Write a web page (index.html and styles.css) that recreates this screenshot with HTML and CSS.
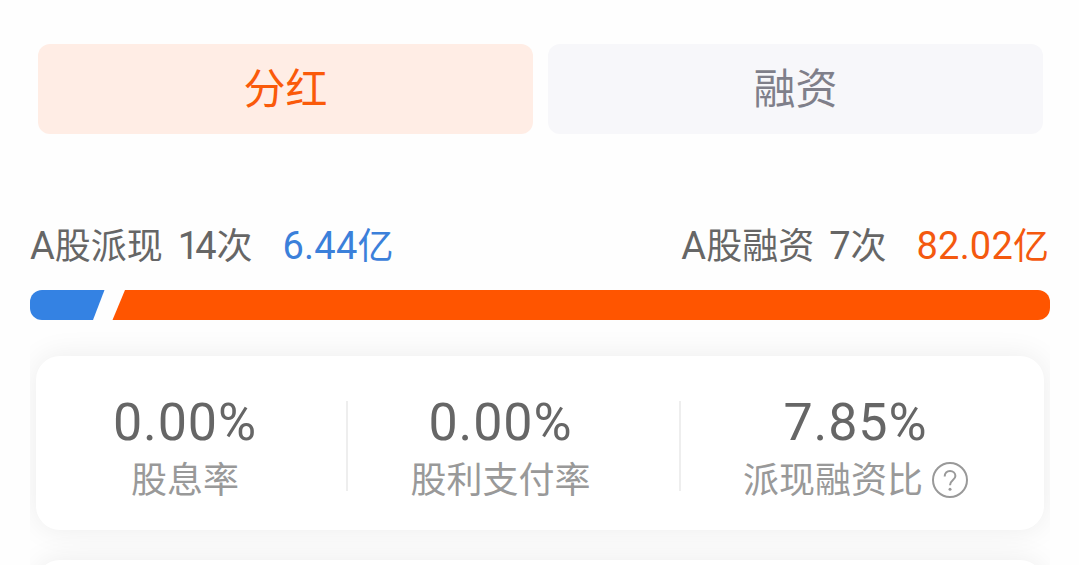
FILE: index.html
```html
<!DOCTYPE html>
<html lang="zh-CN">
<head>
<meta charset="utf-8">
<title>分红融资</title>
<link rel="stylesheet" href="styles.css">
</head>
<body>
<nav class="tabs">
  <div class="tab tab-active">分红</div>
  <div class="tab">融资</div>
</nav>
<section class="summary">
  <div class="total">
    <span class="name"><span class="num">A</span>股派现</span>
    <span class="times"><span class="num"><span class="one">1</span>4</span>次</span>
    <span class="amount blue"><span class="num">6.44</span>亿</span>
  </div>
  <div class="total">
    <span class="name"><span class="num">A</span>股融资</span>
    <span class="times"><span class="num">7</span>次</span>
    <span class="amount orange"><span class="num">82.02</span>亿</span>
  </div>
</section>
<svg class="ratio" viewBox="0 0 1020 30">
  <path d="M12 0H74.5L63 30H12A12 12 0 0 1 0 18V12A12 12 0 0 1 12 0Z" fill="#3482e3"/>
  <path d="M95 0H1008A12 12 0 0 1 1020 12V18A12 12 0 0 1 1008 30H82.5Z" fill="#ff5500"/>
</svg>
<main class="cards">
  <div class="card">
    <div class="metric first">
      <div class="value">0.00%</div>
      <div class="label">股息率</div>
    </div>
    <div class="metric middle">
      <div class="value">0.00%</div>
      <div class="label">股利支付率</div>
    </div>
    <div class="metric last">
      <div class="value">7.85%</div>
      <div class="label">派现融资比
        <svg class="help" viewBox="0 0 36 36" fill="none" stroke="#999" stroke-width="2">
          <circle cx="18" cy="18" r="17"/>
          <path d="M12.7 14.6C12.7 11.2 14.9 9 18 9S23.4 11.2 23.4 13.9C23.4 18 18 18 18 23.2"/>
          <circle cx="18" cy="27.2" r="1.5" fill="#999" stroke="none"/>
        </svg>
      </div>
    </div>
  </div>
  <div class="card next"></div>
</main>
</body>
</html>
```
FILE: styles.css
```css
* { box-sizing: border-box; }
body {
  margin: 0;
  height: 565px;
  overflow: hidden;
  background: #fefefe;
  color: #666;
  font-family: Roboto, "Noto Sans CJK SC", sans-serif;
}
.tabs {
  display: flex;
  gap: 15px;
  padding: 44px 36px 0 38px;
}
.tab {
  flex: 1;
  height: 90px;
  border-radius: 12px;
  background: #f7f7fa;
  color: #7f7f8a;
  font-size: 42px;
  line-height: 92px;
  text-align: center;
}
.tab-active { background: #ffede5; color: #fa5a0a; }
.summary {
  display: flex;
  justify-content: space-between;
  height: 156px;
  padding: 88px 30px 0;
  font-size: 36px;
  line-height: 50px;
  white-space: nowrap;
}
.total { display: flex; }
.num { font-size: 38px; line-height: 1; }
.amount .num { letter-spacing: 0.2px; }
.one { letter-spacing: -4px; }
.times { margin-left: 15px; }
.amount { margin-left: 30px; }
.blue { color: #3b80da; }
.orange { color: #f4590f; }
.ratio { display: block; width: 1020px; height: 30px; margin-left: 30px; }
.cards {
  width: 1020px;
  height: 245px;
  margin-left: 30px;
  padding: 36px 6px 0;
  overflow: hidden;
}
.card {
  display: flex;
  height: 174px;
  border-radius: 24px;
  background: #fff;
  box-shadow: 0 0 30px rgba(0, 0, 0, 0.075);
}
.next { margin-top: 30px; }
.metric {
  position: relative;
  width: 333px;
  padding-top: 38px;
  text-align: center;
}
.first { width: 312px; padding-right: 14px; }
.middle { padding-right: 28px; }
.last { width: 363px; padding-right: 14px; }
.metric:not(.last)::after {
  content: "";
  position: absolute;
  top: 45px;
  right: 0;
  width: 2px;
  height: 90px;
  background: #eee;
}
.value { font-size: 52px; line-height: 58px; letter-spacing: 0.9px; }
.label {
  display: flex;
  align-items: center;
  justify-content: center;
  height: 56px;
  padding-top: 2px;
  color: #999;
  font-size: 36px;
  line-height: 58px;
}
.help { width: 36px; height: 36px; margin: 0 0 2px 9px; }
```
